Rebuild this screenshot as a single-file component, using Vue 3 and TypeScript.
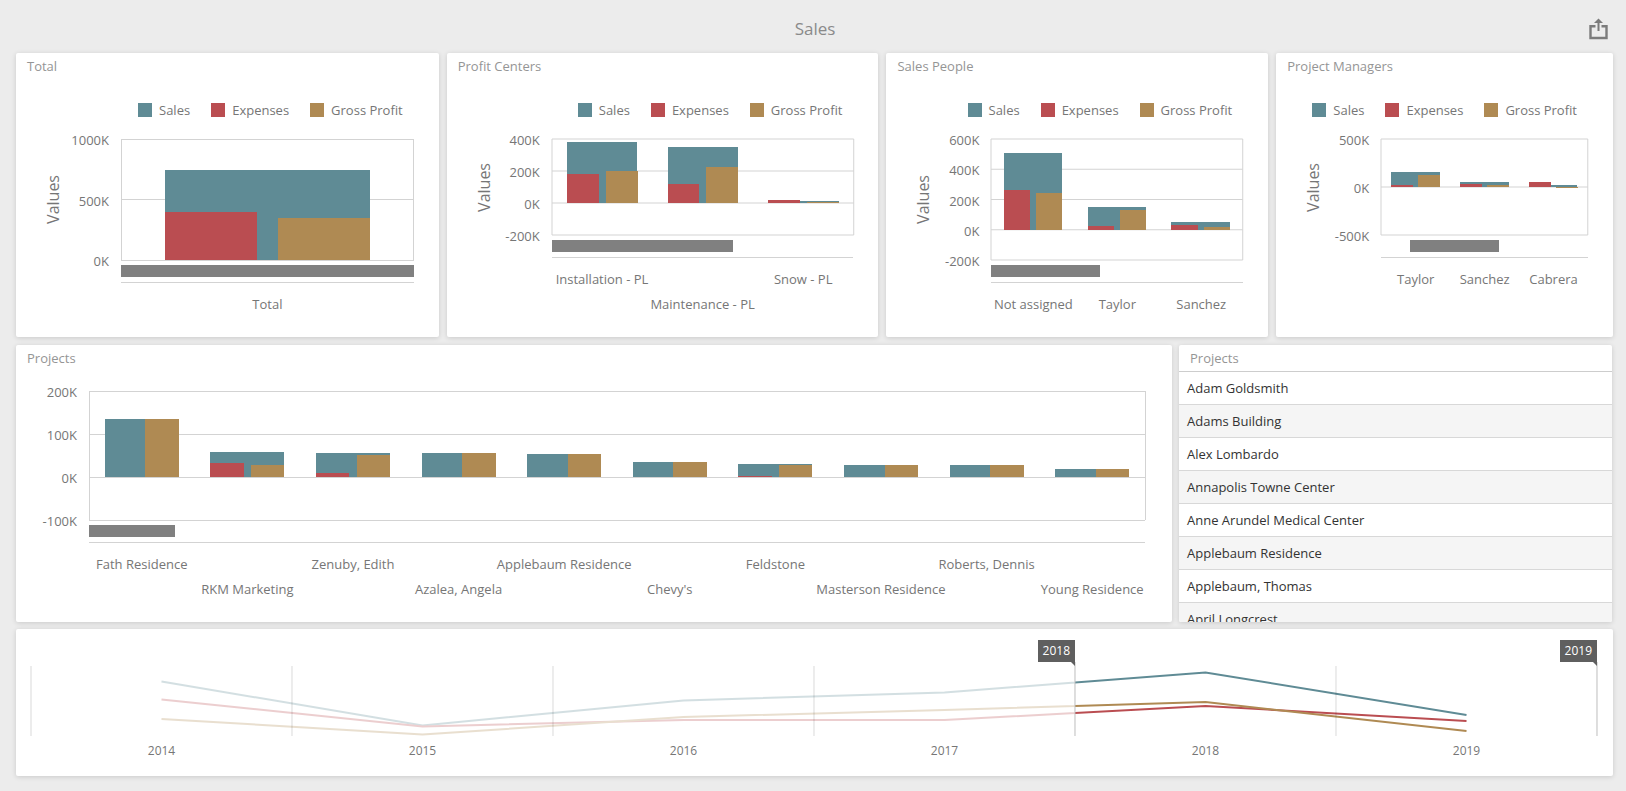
<script setup lang="ts">
interface Row {
  name: string
  sales: number
  expenses: number
  profit: number
}
interface Chart {
  title: string
  ticks: number[]
  rows: Row[]
  labels: 'single' | 'tall' | 'tall staggered'
  thumb: { start: number; size: number }
}

const row = (name: string, sales: number, expenses: number, profit: number): Row => ({
  name, sales, expenses, profit,
})

const series = [
  { key: 'sales', label: 'Sales' },
  { key: 'expenses', label: 'Expenses' },
  { key: 'profit', label: 'Gross Profit' },
] as const

const charts: Chart[] = [
  {
    title: 'Total',
    ticks: [1000, 500, 0],
    rows: [row('Total', 741, 394, 346)],
    labels: 'single',
    thumb: { start: 0, size: 100 },
  },
  {
    title: 'Profit Centers',
    ticks: [400, 200, 0, -200],
    rows: [
      row('Installation - PL', 381, 184, 197),
      row('Maintenance - PL', 347, 120, 226),
      row('Snow - PL', 15, 17, 8),
    ],
    labels: 'tall staggered',
    thumb: { start: 0, size: 60 },
  },
  {
    title: 'Sales People',
    ticks: [600, 400, 200, 0, -200],
    rows: [row('Not assigned', 506, 265, 241), row('Taylor', 153, 25, 128), row('Sanchez', 49, 34, 16)],
    labels: 'single',
    thumb: { start: 0, size: 43 },
  },
  {
    title: 'Project Managers',
    ticks: [500, 0, -500],
    rows: [row('Taylor', 155, 25, 130), row('Sanchez', 49, 34, 22), row('Cabrera', 24, 48, -12)],
    labels: 'tall',
    thumb: { start: 14, size: 43 },
  },
]

const projectChart: Chart = {
  title: 'Projects',
  ticks: [200, 100, 0, -100],
  rows: [
    row('Fath Residence', 134, 0, 134),
    row('RKM Marketing', 58, 32, 29),
    row('Zenuby, Edith', 56, 9, 51),
    row('Azalea, Angela', 56, 0, 56),
    row('Applebaum Residence', 53, 0, 53),
    row("Chevy's", 35, 0, 35),
    row('Feldstone', 30, 3, 27),
    row('Masterson Residence', 27, 0, 27),
    row('Roberts, Dennis', 27, 0, 27),
    row('Young Residence', 19, 0, 19),
  ],
  labels: 'tall staggered',
  thumb: { start: 0, size: 8.1 },
}

const projects = [
  'Adam Goldsmith', 'Adams Building', 'Alex Lombardo', 'Annapolis Towne Center',
  'Anne Arundel Medical Center', 'Applebaum Residence', 'Applebaum, Thomas', 'April Longcrest',
]

// Offset and width of each bar, as parts of its category's width.
const extent: Record<string, [number, number]> = {
  sales: [0.15, 0.7],
  expenses: [0.15, 0.316],
  profit: [0.535, 0.316],
}

function bars(chart: Chart) {
  const max = chart.ticks[0]
  const span = max - chart.ticks[chart.ticks.length - 1]
  const y = (v: number) => ((max - v) / span) * 100
  const w = 100 / chart.rows.length
  return chart.rows.flatMap((r, i) =>
    series.map((s) => {
      const v = r[s.key]
      const [offset, width] = extent[s.key]
      return {
        id: `${i}-${s.key}`,
        kind: s.key,
        x: (i + offset) * w,
        width: width * w,
        y: y(Math.max(v, 0)),
        height: (Math.abs(v) / span) * 100,
      }
    }),
  )
}

const years = [2014, 2015, 2016, 2017, 2018, 2019]
// The range's ends: the flag stands at the right edge of its year's column.
const flags: Record<number, string> = { 2017: '2018', 2019: '2019' }
// Heights measured down from the top of the range selector, one per year.
const trends = [
  { kind: 'sales', values: [15.5, 59.5, 34.5, 26.5, 6.5, 49] },
  { kind: 'expenses', values: [33.5, 60.5, 54, 54, 40, 55] },
  { kind: 'profit', values: [53, 68.5, 51, 44, 36, 65] },
].map((t) => ({ kind: t.kind, points: t.values.map((v, i) => `${i * 100 + 50},${v}`).join(' ') }))
</script>

<template>
  <main class="page">
    <header class="topbar">
      <h1>Sales</h1>
      <button class="share" type="button" aria-label="Export">
        <svg width="20" height="22" viewBox="0 0 20 22">
          <path d="M6.5 8.3H1.5V20H17.5V8.3H12.5" fill="none" stroke="#7b7b7b" stroke-width="2.4" />
          <path d="M9.5 3V13" stroke="#7b7b7b" stroke-width="2" />
          <path d="M5 5L9.5 0.5L14 5Z" fill="#7b7b7b" />
        </svg>
      </button>
    </header>

    <div class="row summary">
      <section v-for="c in charts" :key="c.title" class="card">
        <h2>{{ c.title }}</h2>
        <ul class="legend">
          <li v-for="s in series" :key="s.key"><i :class="s.key"></i>{{ s.label }}</li>
        </ul>
        <div class="chart">
          <div class="axis-title"><span>Values</span></div>
          <div class="ticks"><span v-for="t in c.ticks" :key="t">{{ t }}K</span></div>
          <svg class="plot" viewBox="0 0 100 100" preserveAspectRatio="none">
            <line v-for="(t, i) in c.ticks" :key="t" x1="0" x2="100"
              :y1="(i / (c.ticks.length - 1)) * 100" :y2="(i / (c.ticks.length - 1)) * 100" />
            <path class="sides" d="M0 0V100M100 0V100" />
            <rect v-for="b in bars(c)" :key="b.id" :class="b.kind" :x="b.x" :y="b.y" :width="b.width" :height="b.height" />
          </svg>
          <div class="below">
            <div class="track">
              <div class="thumb" :style="{ marginLeft: c.thumb.start + '%', width: c.thumb.size + '%' }"></div>
            </div>
            <div class="names" :class="c.labels">
              <span v-for="r in c.rows" :key="r.name">{{ r.name }}</span>
            </div>
          </div>
        </div>
      </section>
    </div>

    <div class="row details">
      <section class="card wide">
        <h2>{{ projectChart.title }}</h2>
        <div class="chart">
          <div class="ticks"><span v-for="t in projectChart.ticks" :key="t">{{ t }}K</span></div>
          <svg class="plot" viewBox="0 0 100 100" preserveAspectRatio="none">
            <line v-for="(t, i) in projectChart.ticks" :key="t" x1="0" x2="100"
              :y1="(i / 3) * 100" :y2="(i / 3) * 100" />
            <path class="sides" d="M0 0V100M100 0V100" />
            <rect v-for="b in bars(projectChart)" :key="b.id" :class="b.kind" :x="b.x" :y="b.y" :width="b.width" :height="b.height" />
          </svg>
          <div class="below">
            <div class="track">
              <div class="thumb" :style="{ marginLeft: projectChart.thumb.start + '%', width: projectChart.thumb.size + '%' }"></div>
            </div>
            <div class="names" :class="projectChart.labels">
              <span v-for="r in projectChart.rows" :key="r.name">{{ r.name }}</span>
            </div>
          </div>
        </div>
      </section>

      <section class="card list">
        <table>
          <thead><tr><th scope="col">Projects</th></tr></thead>
          <tbody>
            <tr v-for="p in projects" :key="p"><td>{{ p }}</td></tr>
          </tbody>
        </table>
      </section>
    </div>

    <section class="card range">
      <div class="flags">
        <div v-for="y in years" :key="y"><span v-if="flags[y]" class="flag">{{ flags[y] }}</span></div>
      </div>
      <svg class="trend" viewBox="0 0 600 70" preserveAspectRatio="none">
        <defs>
          <clipPath id="outside"><rect x="0" y="0" width="400" height="70" /></clipPath>
          <clipPath id="inside"><rect x="400" y="0" width="200" height="70" /></clipPath>
        </defs>
        <g class="faded" clip-path="url(#outside)">
          <polyline v-for="t in trends" :key="t.kind" :class="t.kind" :points="t.points" />
        </g>
        <g clip-path="url(#inside)">
          <polyline v-for="t in trends" :key="t.kind" :class="t.kind" :points="t.points" />
        </g>
        <path class="marks" d="M0 0V70M100 0V70M200 0V70M300 0V70M500 0V70" />
        <path class="handles" d="M400 -4V70M600 -4V70" />
      </svg>
      <div class="years"><span v-for="y in years" :key="y">{{ y }}</span></div>
    </section>
  </main>
</template>

<style>
body {
  margin: 0;
  background: #ececec;
}
</style>

<style scoped>
* {
  box-sizing: border-box;
}
.page {
  display: grid;
  grid-template-rows: 53px minmax(0, 292fr) minmax(0, 284fr) minmax(0, 147fr);
  height: 100vh;
  min-height: 640px;
  padding: 0 13px 15px 16px;
  font: 13px/20px "Open Sans", "Noto Sans", sans-serif;
  color: #767676;
  background: #ececec;
}
.topbar {
  display: grid;
  grid-template-columns: 1fr auto 1fr;
  align-items: center;
  padding: 5px 4px 0 5px;
}
h1 {
  grid-column: 2;
  margin: 0;
  font-size: 17px;
  font-weight: 400;
  line-height: 24px;
  color: #8a8a8a;
}
.share {
  justify-self: end;
  display: flex;
  padding: 0;
  border: 0;
  background: none;
  cursor: pointer;
}
.row {
  display: grid;
  min-height: 0;
}
.summary {
  grid-template-columns: 423fr 432fr 382fr 337fr;
  gap: 8px;
  margin-bottom: 8px;
}
.details {
  grid-template-columns: 1156fr 433fr;
  gap: 7px;
  margin-bottom: 7px;
  margin-right: 1px;
}
.card {
  display: flex;
  flex-direction: column;
  min-width: 0;
  min-height: 0;
  border-radius: 2px;
  background: #fff;
  box-shadow: 0 1px 5px rgba(0, 0, 0, 0.15);
}
h2 {
  margin: 0;
  padding-left: 11px;
  font-size: 13px;
  font-weight: 400;
  line-height: 27px;
  color: #959595;
}
.legend {
  display: flex;
  justify-content: flex-end;
  gap: 21px;
  margin: 20px 36px 19px 0;
  padding: 0;
  list-style: none;
}
.legend li {
  display: flex;
  align-items: center;
  gap: 7px;
  white-space: nowrap;
}
.legend i {
  width: 14px;
  height: 14px;
}
i.sales { background: #5f8b95; }
i.expenses { background: #ba4d51; }
i.profit { background: #af8a53; }

.chart {
  flex: 1;
  display: grid;
  grid-template-columns: 24px 56px minmax(0, 1fr);
  grid-template-rows: minmax(0, 1fr) auto;
  min-height: 0;
  padding: 0 25px 20px 25px;
}
.wide .chart {
  grid-template-columns: 56px minmax(0, 1fr);
  padding: 19px 27px 20px 17px;
}
.axis-title {
  display: flex;
  align-items: center;
  justify-content: center;
  font-size: 16px;
}
.axis-title span {
  writing-mode: vertical-rl;
  transform: rotate(180deg);
}
.ticks {
  display: flex;
  flex-direction: column;
  justify-content: space-between;
  margin: -9px 0 -11px;
  padding-right: 12px;
  text-align: right;
}
.plot {
  display: block;
  width: 100%;
  height: 100%;
  overflow: visible;
  shape-rendering: crispEdges;
}
.plot line,
.sides {
  stroke: #d3d3d3;
  vector-effect: non-scaling-stroke;
}
rect.sales { fill: #5f8b95; }
rect.expenses { fill: #ba4d51; }
rect.profit { fill: #af8a53; }
.below {
  grid-column: -2;
}
.track {
  padding: 5px 0;
  border-bottom: 1px solid #d3d3d3;
}
.thumb {
  height: 12px;
  background: #808080;
}
.names {
  display: flex;
  height: 34px;
  padding-top: 9px;
  line-height: 25px;
}
.names.tall {
  height: 59px;
}
.names span {
  flex: 1 1 0;
  display: flex;
  justify-content: center;
  min-width: 0;
  white-space: nowrap;
}
.names.staggered span:nth-child(even) {
  padding-top: 25px;
}

.list {
  overflow: hidden;
}
table {
  width: 100%;
  border-collapse: collapse;
}
th {
  height: 26px;
  padding: 0 11px;
  border-bottom: 1px solid #cdcdcd;
  font-weight: 400;
  text-align: left;
  color: #959595;
}
td {
  height: 33px;
  padding: 0 8px;
  border-bottom: 1px solid #d8d8d8;
  color: #333;
}
tbody tr:nth-child(even) {
  background: #f5f5f5;
}

.range {
  padding: 11px 16px 15px 15px;
}
.flags,
.years {
  display: grid;
  grid-template-columns: repeat(6, 1fr);
}
.flags {
  height: 26px;
}
.flags div {
  display: flex;
  justify-content: flex-end;
}
.flag {
  position: relative;
  height: 22px;
  padding: 0 5px;
  font-size: 12px;
  line-height: 22px;
  color: #fff;
  background: #5f5f5f;
}
.flag::after {
  content: "";
  position: absolute;
  top: 100%;
  right: 0;
  border-top: 4px solid #5f5f5f;
  border-left: 4px solid transparent;
}
.trend {
  flex: 1;
  display: block;
  width: 100%;
  min-height: 0;
  overflow: visible;
}
.trend polyline {
  fill: none;
  stroke-width: 2;
  vector-effect: non-scaling-stroke;
}
polyline.sales { stroke: #5f8b95; }
polyline.expenses { stroke: #ba4d51; }
polyline.profit { stroke: #af8a53; }
.faded {
  opacity: 0.27;
}
.marks,
.handles {
  stroke: rgba(0, 0, 0, 0.15);
  stroke-width: 1;
  vector-effect: non-scaling-stroke;
  shape-rendering: crispEdges;
}
.handles {
  stroke: #bdbdbd;
}
.years {
  margin-top: 5px;
  font-size: 12px;
  text-align: center;
}
</style>
